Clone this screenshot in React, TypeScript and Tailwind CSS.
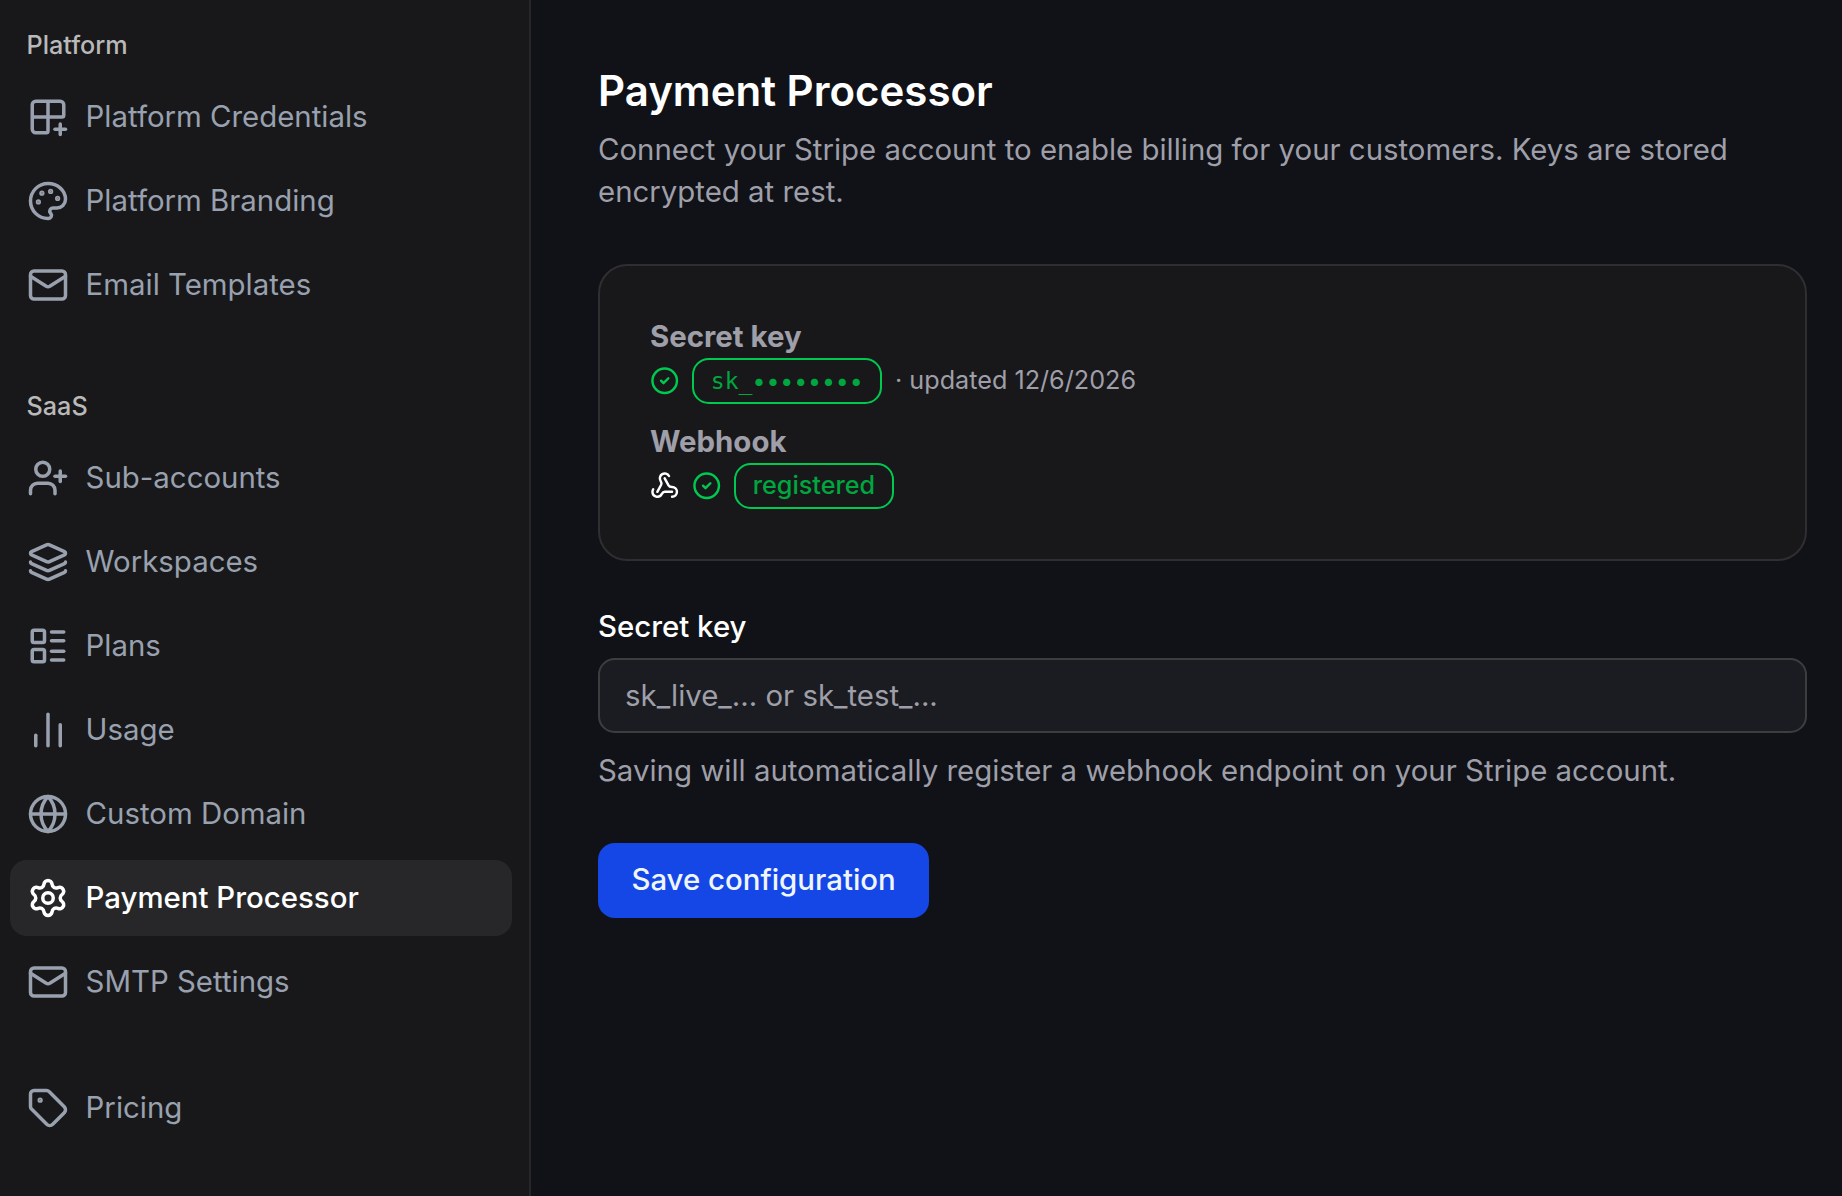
import { Grid2x2Plus, Palette, Mail, UserPlus, Layers, LayoutList, Globe, Settings, Tag, CircleCheck, Webhook, ChartNoAxesColumn } from 'lucide-react';
import type { LucideIcon } from 'lucide-react';

interface NavItem {
    label: string;
    icon: LucideIcon;
    active?: boolean;
}

interface NavGroup {
    title?: string;
    items: NavItem[];
}

const groups: NavGroup[] = [
    {
        title: 'Platform',
        items: [
            { label: 'Platform Credentials', icon: Grid2x2Plus },
            { label: 'Platform Branding', icon: Palette },
            { label: 'Email Templates', icon: Mail },
        ],
    },
    {
        title: 'SaaS',
        items: [
            { label: 'Sub-accounts', icon: UserPlus },
            { label: 'Workspaces', icon: Layers },
            { label: 'Plans', icon: LayoutList },
            { label: 'Usage', icon: ChartNoAxesColumn },
            { label: 'Custom Domain', icon: Globe },
            { label: 'Payment Processor', icon: Settings, active: true },
            { label: 'SMTP Settings', icon: Mail },
        ],
    },
    {
        items: [{ label: 'Pricing', icon: Tag }],
    },
];

const NavLink = ({ label, icon: Icon, active }: NavItem) => (
    <a
        href="#"
        className={`flex h-[75.6px] items-center gap-[16.8px] rounded-[16.8px] px-[16.8px] text-[29.4px] leading-[42px] ${
            active ? 'bg-[#27272a] font-medium text-white' : 'text-[#99a1af]'
        }`}
    >
        <Icon size={42} className="shrink-0" />
        <span>{label}</span>
    </a>
);

const Sidebar = () => (
    <aside className="flex w-[531px] shrink-0 flex-col gap-[50.4px] border-r-2 border-[#27272a] bg-[#18181b] pt-[12px] pr-[16.8px] pl-[10px]">
        {groups.map((group, i) => (
            <nav key={i}>
                {group.title && (
                    <div className="flex h-[67.2px] items-center px-[16.5px] pb-[2px] text-[25.2px] font-medium text-[#b9b9b9]">{group.title}</div>
                )}
                <div className="flex flex-col gap-[8.4px]">
                    {group.items.map(item => (
                        <NavLink key={item.label} {...item} />
                    ))}
                </div>
            </nav>
        ))}
    </aside>
);

const StatusCard = () => (
    <section className="mt-[50.4px] flex flex-col gap-[16.8px] rounded-[29.4px] border-2 border-[#2f2f31] bg-[#18181b] p-[50px]">
        <div>
            <div className="font-bold text-[#9f9fa9]">Secret key</div>
            <div className="flex items-center gap-[12.6px]">
                <CircleCheck size={29.4} className="text-[#00c950]" />
                <span className="flex h-[46px] items-center rounded-[16.8px] border-2 border-[#00c950] px-[16.8px] text-[23.1px] text-[#00a63e]">
                    <span className="font-['DejaVu_Sans_Mono',monospace]">
                        sk_<span className="font-[Inter,sans-serif] tracking-[0.9px]">••••••••</span>
                    </span>
                </span>
                <span className="pb-[2px] text-[25.2px] text-[#9f9fa9]">· updated 12/6/2026</span>
            </div>
        </div>
        <div>
            <div className="font-bold text-[#9f9fa9]">Webhook</div>
            <div className="flex items-center gap-[12.6px]">
                <Webhook size={29.4} className="text-white" />
                <CircleCheck size={29.4} className="text-[#00c950]" />
                <span className="flex h-[46px] items-center rounded-[16.8px] border-2 border-[#00c950] px-[16.8px] pb-[2px] text-[25.2px] font-medium text-[#00a63e]">
                    registered
                </span>
            </div>
        </div>
    </section>
);

export default function App() {
    return (
        <div className="flex h-screen overflow-hidden bg-[#101217] font-[Inter,sans-serif] text-[29.4px] leading-[42px] [font-variation-settings:'opsz'_14]">
            <Sidebar />
            <main className="flex-1 pt-[62.2px] pr-[35px] pl-[67px]">
                <h1 className="text-[42px] leading-[58.8px] font-semibold text-white">Payment Processor</h1>
                <p className="mt-[8.4px] text-[#9f9fa9]">
                    Connect your Stripe account to enable billing for your customers. Keys are stored encrypted at rest.
                </p>

                <StatusCard />

                <form className="mt-[51.2px] flex flex-col items-start" onSubmit={e => e.preventDefault()}>
                    <label htmlFor="secret-key" className="leading-[29.4px] font-medium text-white">
                        Secret key
                    </label>
                    <input
                        id="secret-key"
                        type="text"
                        placeholder="sk_live_... or sk_test_..."
                        className="mt-[16.8px] h-[75px] w-full rounded-[16.8px] border-2 border-[#3d3d40] bg-[#1b1c21] px-[25px] placeholder:text-[#9f9fa9]"
                    />
                    <p className="mt-[17.2px] text-[#9f9fa9]">Saving will automatically register a webhook endpoint on your Stripe account.</p>
                    <button type="submit" className="mt-[50.8px] h-[75px] rounded-[16.8px] bg-[#1447e6] px-[33.4px] pb-[1px] font-medium text-[#eff6ff]">
                        Save configuration
                    </button>
                </form>
            </main>
        </div>
    );
}
